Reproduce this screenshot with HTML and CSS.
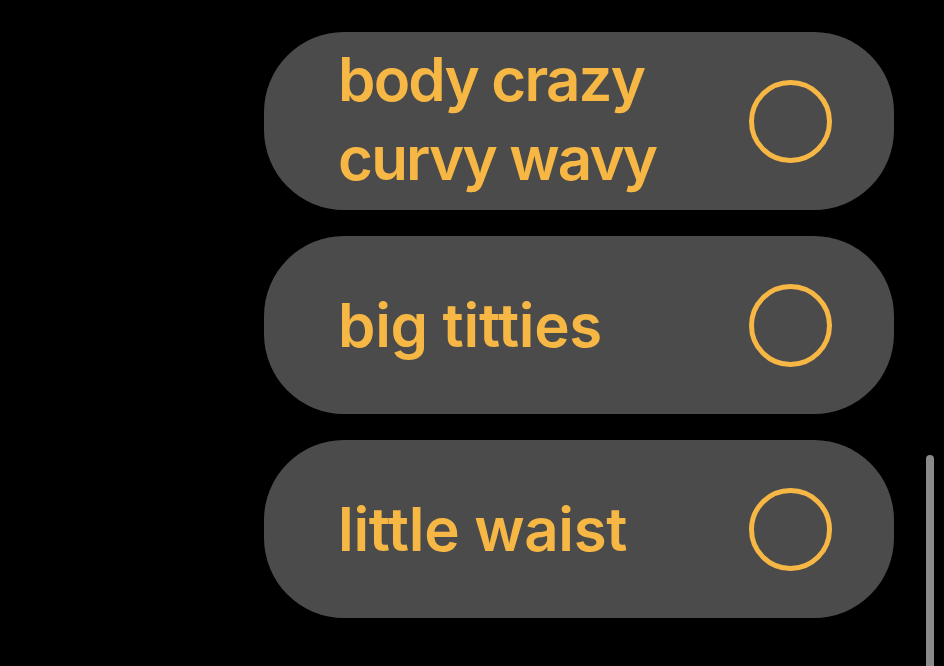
FILE: index.html
```html
<!DOCTYPE html>
<html>
<head>
<meta charset="utf-8">
<link rel="stylesheet" href="styles.css">
</head>
<body>
<div class="list">
  <div class="row">
    <span class="label label-tight">body crazy<br>curvy wavy</span>
    <span class="check"></span>
  </div>
  <div class="row">
    <span class="label">big titties</span>
    <span class="check"></span>
  </div>
  <div class="row">
    <span class="label">little waist</span>
    <span class="check"></span>
  </div>
</div>
<div class="scrollbar"></div>
</body>
</html>
```
FILE: styles.css
```css
html, body {
  margin: 0;
  padding: 0;
  background: #000;
  height: 666px;
  overflow: hidden;
}
body {
  font-family: Inter, "Noto Sans", sans-serif;
  position: relative;
}
.list {
  display: flex;
  flex-direction: column;
  gap: 26px;
  padding-top: 32px;
  padding-left: 264px;
  width: 630px;
}
.row {
  height: 178px;
  border-radius: 80px;
  background: #4b4b4b;
  display: flex;
  align-items: center;
  justify-content: space-between;
  padding: 0 62px 0 74px;
}
.label {
  color: #f6b744;
  font-weight: 600;
  font-size: 60px;
  line-height: 79px;
  letter-spacing: -0.3px;
}
.label-tight {
  letter-spacing: -1.8px;
  margin-top: -4px;
}
.check {
  width: 73px;
  height: 73px;
  border: 5px solid #f6b744;
  border-radius: 50%;
  flex: none;
}
.scrollbar {
  position: absolute;
  left: 926px;
  top: 455px;
  width: 8px;
  height: 230px;
  border-radius: 4px;
  background: #8a8a8a;
}
```
